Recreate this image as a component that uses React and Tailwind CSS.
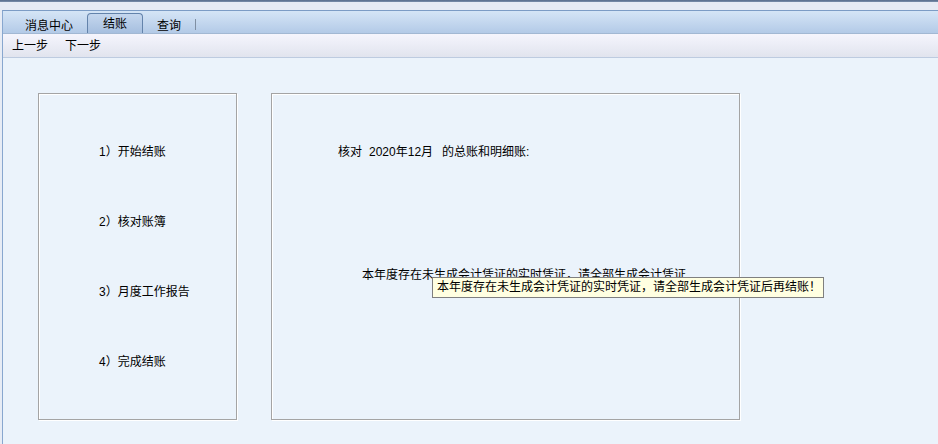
const font = { fontFamily: '"Liberation Sans", "Noto Sans CJK SC", sans-serif' };

const steps = ["1）开始结账", "2）核对账簿", "3）月度工作报告", "4）完成结账"];

export default function App() {
  return (
    <div
      className="relative w-[938px] h-[444px] overflow-hidden bg-[#e7ecf5] flex flex-col text-[12px] text-black"
      style={font}
    >
      {/* window top edge */}
      <div className="h-[2px] bg-gradient-to-b from-[#566b8a] to-[#7b90ac]" />
      <div className="h-[8px] bg-[#e6ebf4]" />

      <div className="flex-1 flex flex-col ml-[2px] border-l border-[#88a7cf] border-t border-t-[#7c9cc5] bg-[#ebf3fb]">
        {/* Tabs */}
        <div className="h-[23px] flex items-end pl-[18px] bg-gradient-to-b from-[#d5e5f6] to-[#b3cae7] border-b border-[#a2b8d3]">
          <div className="w-[56px] h-[19px] leading-[25px] text-center">消息中心</div>
          <div className="ml-[10px] w-[56px] h-[20px] leading-[20px] text-center rounded-t-[4px] border border-b-0 border-[#6383ab] bg-gradient-to-b from-[#c5d7ee] to-[#a6bfdf]">
            结账
          </div>
          <div className="w-[52px] h-[19px] leading-[25px] text-center">查询</div>
          <div className="mb-[3px] w-px h-[11px] bg-[#7f8fa3]" />
        </div>

        {/* Toolbar */}
        <div className="h-[24px] flex items-center gap-[17px] pl-[9px] bg-gradient-to-b from-[#f5f5fd] to-[#e1e4ee] border-b border-[#bdcbe0]">
          <span>上一步</span>
          <span>下一步</span>
        </div>

        {/* Content */}
        <div className="flex-1 flex items-start gap-[34px] pl-[35px] pt-[35px]">
          <div className="w-[199px] h-[327px] border border-[#a4a4a4] shadow-[inset_1px_1px_0_#fff,1px_1px_0_#fff] flex flex-col gap-[56px] pl-[60px] pt-[51px]">
            {steps.map((s) => (
              <div key={s} className="h-[14px] leading-[14px] whitespace-nowrap">
                {s}
              </div>
            ))}
          </div>

          <div className="w-[469px] h-[327px] border border-[#a4a4a4] shadow-[inset_1px_1px_0_#fff,1px_1px_0_#fff] flex flex-col pt-[51px]">
            <div className="h-[14px] leading-[14px] pl-[66px] whitespace-nowrap">
              <span>核对</span>
              <span className="ml-[7px]">2020年12月</span>
              <span className="ml-[9px]">的总账和明细账:</span>
            </div>
            <div className="mt-[109px] h-[14px] leading-[14px] pl-[90px] whitespace-nowrap">
              本年度存在未生成会计凭证的实时凭证，请全部生成会计凭证
            </div>
          </div>
        </div>
      </div>

      {/* Tooltip */}
      <div className="absolute left-[432px] top-[277px] w-[392px] h-[21px] leading-[19px] pl-[4px] bg-[#ffffe1] border border-[#7f7f7f] whitespace-nowrap">
        本年度存在未生成会计凭证的实时凭证，请全部生成会计凭证后再结账！
      </div>
    </div>
  );
}
